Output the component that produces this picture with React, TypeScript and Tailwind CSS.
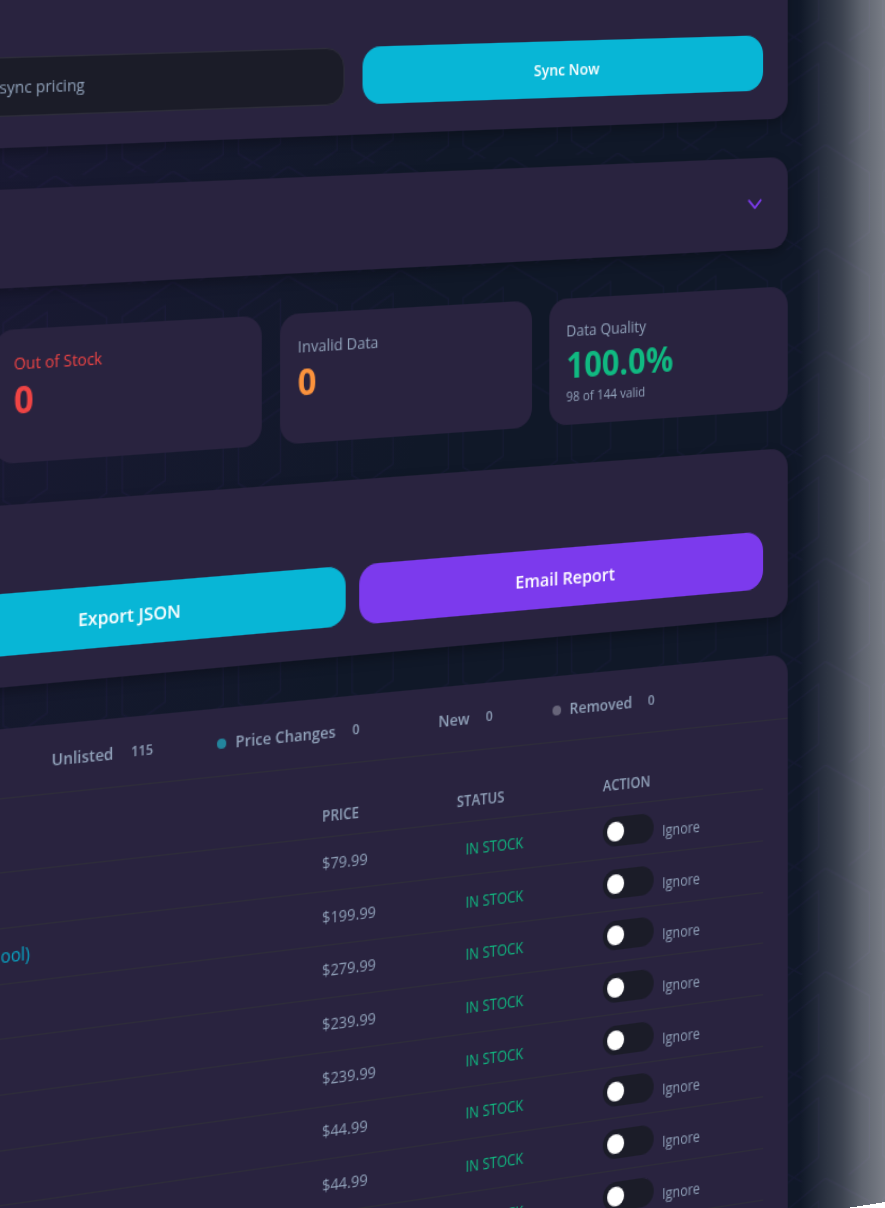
import React from "react";

const stats = [
    { label: "Out of Stock", value: "0", labelColor: "text-[#ef4444]", valueColor: "text-[#ef4444]" },
    { label: "Invalid Data", value: "0", labelColor: "text-slate-400", valueColor: "text-[#fb923c]" },
    { label: "Data Quality", value: "100.0%", labelColor: "text-slate-400", valueColor: "text-[#10b981]", note: "98 of 144 valid" },
];

const tabs = [
    { name: "Unlisted", count: 115, dot: "bg-transparent" },
    { name: "Price Changes", count: 0, dot: "bg-[#23859d]" },
    { name: "New", count: 0, dot: "bg-transparent" },
    { name: "Removed", count: 0, dot: "bg-[#676479]" },
];

const products = [
    { id: 1, name: "", price: "$79.99" },
    { id: 2, name: "(1kg Spool)", price: "$199.99" },
    { id: 3, name: "", price: "$279.99" },
    { id: 4, name: "", price: "$239.99" },
    { id: 5, name: "", price: "$239.99" },
    { id: 6, name: "", price: "$44.99" },
    { id: 7, name: "", price: "$44.99" },
    { id: 8, name: "", price: "$44.99" },
    { id: 9, name: "", price: "$44.99" },
];

const Hexagons: React.FC = () => (
    <svg className="absolute inset-0 h-full w-full" aria-hidden="true">
        <defs>
            <pattern id="hexagons" width="100" height="86.6" patternUnits="userSpaceOnUse">
                <path
                    d="M50 0 93.3 25V75L50 100 6.7 75V25ZM10 37.5 43.3 18.3V68.3L10 87.5"
                    fill="none"
                    stroke="#7c3aed"
                    strokeOpacity="0.06"
                />
            </pattern>
        </defs>
        <rect width="100%" height="100%" fill="url(#hexagons)" />
    </svg>
);

const SyncPanel: React.FC = () => (
    <section className="flex h-[150px] items-end rounded-b-2xl bg-[#29233f] p-6 shadow-[0_4px_10px_rgba(0,0,0,0.25)]">
        <div className="grid w-full grid-cols-3 gap-4">
            <div className="col-start-2 flex h-[46px] items-center rounded-2xl border border-[#2d2d3a] bg-[#1b1c28] px-5 pt-0.5 text-[13px] text-slate-400">
                Ready to sync pricing
            </div>
            <button className="h-[46px] rounded-2xl bg-[#08b6d6] pt-0.5 text-[13px] font-semibold text-white">Sync Now</button>
        </div>
    </section>
);

const CollapsedPanel: React.FC = () => (
    <section className="flex h-[76px] items-center justify-end rounded-2xl bg-[#29233f] px-6 shadow-[0_4px_10px_rgba(0,0,0,0.25)]">
        <button aria-label="Expand">
            <svg className="size-4" viewBox="0 0 16 16" fill="none" stroke="#7c3aed" strokeWidth="1.8" strokeLinecap="round" strokeLinejoin="round">
                <path d="m2.3 5.2 5.7 6.2 5.7-6.2" />
            </svg>
        </button>
    </section>
);

const StatCards: React.FC = () => (
    <section className="grid grid-cols-5 gap-4">
        {stats.map((stat) => (
            <div key={stat.label} className="h-[103px] rounded-2xl bg-[#29233f] px-4 pt-4 first:col-start-3">
                <div className={`text-[13px] leading-5 ${stat.labelColor}`}>{stat.label}</div>
                <div className={`text-[29px] leading-9 font-bold ${stat.valueColor}`}>{stat.value}</div>
                {stat.note && <div className="text-[11px] leading-4 text-slate-400">{stat.note}</div>}
            </div>
        ))}
    </section>
);

const ExportPanel: React.FC = () => (
    <section className="flex h-[140px] items-end rounded-2xl bg-[#29233f] p-6 shadow-[0_4px_10px_rgba(0,0,0,0.25)]">
        <div className="grid w-full grid-cols-3 gap-3">
            <button className="col-start-2 h-12 rounded-2xl bg-[#08b6d6] text-[15px] font-semibold text-white">Export JSON</button>
            <button className="h-12 rounded-2xl bg-[#7c3aed] text-[15px] font-semibold text-white">Email Report</button>
        </div>
    </section>
);

const ProductTable: React.FC = () => (
    <section className="rounded-t-2xl bg-[#29233f] text-slate-400">
        <div className="flex h-[54px] items-center border-b border-[#2e2d3a] pt-0.5 pl-[494px]">
            {tabs.map((tab) => (
                <button key={tab.name} className="flex shrink-0 items-center gap-2 px-6 text-[13px] font-semibold">
                    <span className={`size-2 rounded-full ${tab.dot}`} />
                    {tab.name}
                    <span className="px-[7px] text-[11px]">{tab.count}</span>
                </button>
            ))}
        </div>
        <div className="px-6 pt-6">
            <table className="w-full table-fixed border-collapse text-left">
                <thead>
                    <tr className="h-8 border-b border-[#2e2d3a] text-xs">
                        <th aria-label="Product" />
                        <th className="w-[121px] px-3 font-semibold">PRICE</th>
                        <th className="w-[135px] px-3 font-semibold">STATUS</th>
                        <th className="w-[165px] px-3 font-semibold">ACTION</th>
                    </tr>
                </thead>
                <tbody>
                    {products.map((product) => (
                        <tr key={product.id} className="h-[43px] border-b border-[#2e2d3a] nth-[3n]:h-[42px]">
                            <td className="pr-[239px] text-right text-sm">
                                {product.name && (
                                    <a href="#" className="text-[#08a6c6]">
                                        {product.name}
                                    </a>
                                )}
                            </td>
                            <td className="px-3 text-[13px]">{product.price}</td>
                            <td className="px-5 pt-0.5 text-xs text-[#10b981]">IN STOCK</td>
                            <td className="px-3">
                                <label className="flex items-end gap-2 text-xs">
                                    <input
                                        type="checkbox"
                                        className="h-6 w-12 appearance-none rounded-full bg-[#1b1c28] p-1 before:block before:size-4 before:rounded-full before:bg-white checked:bg-violet-600 checked:before:ml-6"
                                    />
                                    Ignore
                                </label>
                            </td>
                        </tr>
                    ))}
                </tbody>
            </table>
        </div>
    </section>
);

export default function App() {
    return (
        <main className="h-screen overflow-hidden bg-[linear-gradient(to_right,#29233f_90%,white_90%)] font-['Open_Sans',sans-serif] perspective-[4068px] perspective-origin-[0_-232px]">
            {/* The dashboard is a flat page turned away on its right side */}
            <div className="relative h-[1067px] w-[1426px] origin-top-left overflow-hidden bg-gray-900 bg-[radial-gradient(circle_at_20%_20%,rgba(124,40,160,0.15),transparent_50%)] [transform:rotateY(22deg)_scale(1.3)_translate(-604px,-36px)]">
                <Hexagons />
                <div className="relative mx-[113px] flex flex-col gap-8">
                    <SyncPanel />
                    <CollapsedPanel />
                    <StatCards />
                    <ExportPanel />
                    <ProductTable />
                </div>
                <div className="absolute inset-y-0 right-0 w-[101px] bg-[linear-gradient(to_right,transparent,rgba(255,255,255,0.19)_41%,rgba(255,255,255,0.33)_60%,rgba(255,255,255,0.44)_83%,rgba(255,255,255,0.5))]" />
            </div>
        </main>
    );
}
